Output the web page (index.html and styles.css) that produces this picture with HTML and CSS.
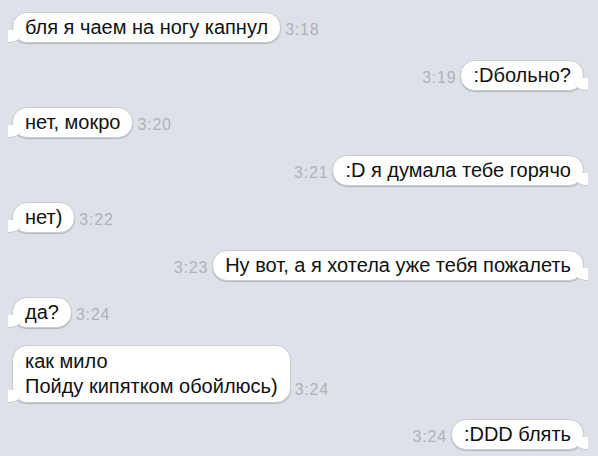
FILE: index.html
```html
<!DOCTYPE html>
<html lang="ru">
<head>
<meta charset="utf-8">
<link rel="stylesheet" href="styles.css">
</head>
<body>
<div class="chat">
  <div class="row in"><div class="bubble">бля я чаем на ногу капнул</div><span class="time">3:18</span></div>
  <div class="row out"><span class="time">3:19</span><div class="bubble">:Dбольно?</div></div>
  <div class="row in"><div class="bubble">нет, мокро</div><span class="time">3:20</span></div>
  <div class="row out"><span class="time">3:21</span><div class="bubble">:D я думала тебе горячо</div></div>
  <div class="row in"><div class="bubble">нет)</div><span class="time">3:22</span></div>
  <div class="row out"><span class="time">3:23</span><div class="bubble">Ну вот, а я хотела уже тебя пожалеть</div></div>
  <div class="row in"><div class="bubble">да?</div><span class="time">3:24</span></div>
  <div class="row in"><div class="bubble multi">как мило<br>Пойду кипятком обойлюсь)</div><span class="time">3:24</span></div>
  <div class="row out"><span class="time">3:24</span><div class="bubble">:DDD блять</div></div>
</div>
</body>
</html>
```
FILE: styles.css
```css
html, body {
  margin: 0;
  padding: 0;
  background: #dee2e8;
  width: 598px;
  height: 456px;
  overflow: hidden;
}
.chat {
  display: flex;
  flex-direction: column;
  gap: 16.5px;
  padding: 12px 14px 0 12px;
  font-family: "Liberation Sans", Arial, sans-serif;
}
.row {
  display: flex;
  align-items: flex-end;
  gap: 4px;
}
.row.out {
  justify-content: flex-end;
}
.bubble {
  position: relative;
  background: #fff;
  color: #111;
  font-size: 20px;
  line-height: 25px;
  padding: 2px 12px 2px 12px;
  border-radius: 15px;
  border: 1px solid #c9cdd3;
  box-shadow: 0 1px 1px rgba(120, 126, 136, 0.45);
}
.bubble.multi {
  padding-top: 3px;
  padding-bottom: 3px;
}
.row.in .bubble::before {
  content: "";
  position: absolute;
  left: -5px;
  bottom: -1px;
  width: 14px;
  height: 12px;
  background: #fff;
  border-bottom: 1px solid #c0c4ca;
  border-bottom-right-radius: 12px 10px;
}
.row.in .bubble::after {
  content: "";
  position: absolute;
  left: -12px;
  bottom: 0;
  width: 7px;
  height: 14px;
  background: #dee2e8;
  border-bottom-right-radius: 8px 8px;
}
.row.out .bubble::before {
  content: "";
  position: absolute;
  right: -5px;
  bottom: -1px;
  width: 14px;
  height: 12px;
  background: #fff;
  border-bottom: 1px solid #c0c4ca;
  border-bottom-left-radius: 12px 10px;
}
.row.out .bubble::after {
  content: "";
  position: absolute;
  right: -12px;
  bottom: 0;
  width: 7px;
  height: 14px;
  background: #dee2e8;
  border-bottom-left-radius: 8px 8px;
}
.time {
  font-size: 16px;
  letter-spacing: 0.8px;
  color: #aeb2b9;
  padding-bottom: 4px;
  line-height: 18px;
}
```
